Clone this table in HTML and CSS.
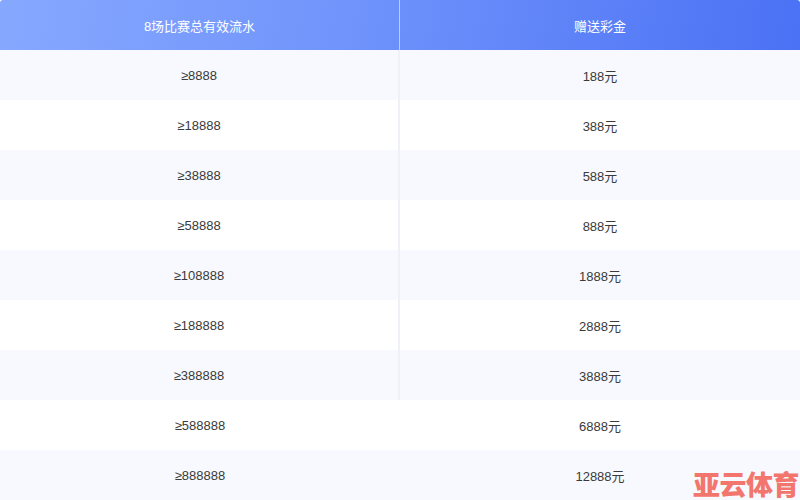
FILE: index.html
```html
<!DOCTYPE html>
<html lang="zh">
<head>
<meta charset="utf-8">
<link rel="stylesheet" href="styles.css">
</head>
<body>
<div class="page">
  <div class="table">
    <div class="head">
      <div class="hcell">8场比赛总有效流水</div>
      <div class="hcell">赠送彩金</div>
    </div>
    <div class="row alt"><div class="cell">≥8888</div><div class="cell">188元</div></div>
    <div class="row"><div class="cell">≥18888</div><div class="cell">388元</div></div>
    <div class="row alt"><div class="cell">≥38888</div><div class="cell">588元</div></div>
    <div class="row"><div class="cell">≥58888</div><div class="cell">888元</div></div>
    <div class="row alt"><div class="cell">≥108888</div><div class="cell">1888元</div></div>
    <div class="row"><div class="cell">≥188888</div><div class="cell">2888元</div></div>
    <div class="row alt"><div class="cell">≥388888</div><div class="cell">3888元</div></div>
    <div class="row nodiv"><div class="cell">≥588888</div><div class="cell">6888元</div></div>
    <div class="row alt nodiv"><div class="cell">≥888888</div><div class="cell">12888元</div></div>
  </div>
  <div class="mark">亚云体育</div>
</div>
</body>
</html>
```
FILE: styles.css
```css
html, body {
  margin: 0;
  padding: 0;
  background: #ffffff;
}
.page {
  position: relative;
  width: 800px;
  height: 500px;
  overflow: hidden;
  font-family: "Liberation Sans", "Noto Sans CJK SC", sans-serif;
}
.table {
  display: flex;
  flex-direction: column;
}
.head {
  display: grid;
  grid-template-columns: 400px 400px;
  height: 50px;
  background: linear-gradient(100deg, #87a8ff 0%, #6f93fb 45%, #4b71f5 100%);
  border-radius: 3px 3px 0 0;
}
.hcell {
  display: flex;
  align-items: center;
  justify-content: center;
  color: #ffffff;
  font-size: 13px;
}
.hcell:first-child {
  border-right: 1px solid rgba(255, 255, 255, 0.55);
  box-sizing: border-box;
}
.row {
  display: grid;
  grid-template-columns: 400px 400px;
  height: 50px;
  background: #ffffff;
}
.row.alt {
  background: #f7f9fe;
}
.cell {
  display: flex;
  align-items: center;
  justify-content: center;
  color: #3a3a3a;
  font-size: 13px;
}
.cell:first-child {
  border-right: 2px solid #eff1f6;
  box-sizing: border-box;
}
.nodiv .cell:first-child {
  border-right: none;
}
.mark {
  position: absolute;
  left: 693px;
  top: 470px;
  font-family: "Noto Sans CJK SC", sans-serif;
  font-weight: 900;
  font-size: 27px;
  line-height: 28px;
  letter-spacing: -0.5px;
  color: #f3766e;
  white-space: nowrap;
}
```
